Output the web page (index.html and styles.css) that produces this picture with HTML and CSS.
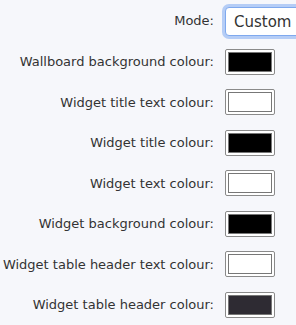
FILE: index.html
```html
<!DOCTYPE html>
<html lang="en">
<head>
	<meta charset="UTF-8">
	<meta name="viewport" content="width=device-width, initial-scale=1.0">
	<title>Wallboard settings</title>
	<link rel="stylesheet" href="styles.css">
</head>
<body>

	<form class="settings">

		<label class="settings__label" for="mode">Mode:</label>
		<div class="settings__control">
			<select id="mode" class="settings__select">
				<option>Custom</option>
				<option>Dark</option>
				<option>Light</option>
			</select>
		</div>

		<label class="settings__label">Wallboard background colour:</label>
		<div class="settings__control"><span class="swatch"><span class="swatch__fill swatch__fill--black"></span></span></div>

		<label class="settings__label">Widget title text colour:</label>
		<div class="settings__control"><span class="swatch"><span class="swatch__fill swatch__fill--white"></span></span></div>

		<label class="settings__label">Widget title colour:</label>
		<div class="settings__control"><span class="swatch"><span class="swatch__fill swatch__fill--black"></span></span></div>

		<label class="settings__label">Widget text colour:</label>
		<div class="settings__control"><span class="swatch"><span class="swatch__fill swatch__fill--white"></span></span></div>

		<label class="settings__label">Widget background colour:</label>
		<div class="settings__control"><span class="swatch"><span class="swatch__fill swatch__fill--black"></span></span></div>

		<label class="settings__label">Widget table header text colour:</label>
		<div class="settings__control"><span class="swatch"><span class="swatch__fill swatch__fill--white"></span></span></div>

		<label class="settings__label">Widget table header colour:</label>
		<div class="settings__control"><span class="swatch"><span class="swatch__fill swatch__fill--dark"></span></span></div>

	</form>

</body>
</html>
```

FILE: styles.css
```css
* {
	margin: 0;
	padding: 0;
	box-sizing: border-box;
	font-family: "DejaVu Sans", Verdana, sans-serif;
}

body {
	background: #f6f7fb;
	color: #333;
}

.settings {
	display: grid;
	grid-template-columns: 214px 71px;
	column-gap: 11px;
	row-gap: 14.5px;
	padding-top: 7px;
	align-items: center;
	overflow: hidden;
}

.settings__label {
	font-size: 13px;
	text-align: right;
	white-space: nowrap;
}

.settings__control {
	display: flex;
	align-items: center;
	padding-left: 4px;
}

.settings__select {
	appearance: none;
	-webkit-appearance: none;
	flex: none;
	width: 110px;
	height: 29px;
	margin-left: -4px;
	margin-bottom: -2px;
	padding: 0 8px;
	font-size: 15px;
	color: #333;
	background: #fff;
	border: 1px solid #7fa9ee;
	border-radius: 4px;
	box-shadow: 0 0 0 3px #b5cdf6;
	outline: none;
}

.swatch {
	display: block;
	width: 50px;
	height: 26px;
	padding: 2px;
	border: 1px solid #8a8a8a;
	border-radius: 2px;
	background: #fff;
	margin-left: -4px;
}

.swatch__fill {
	display: block;
	width: 100%;
	height: 100%;
	border: 1px solid #777;
}

.swatch__fill--black {
	background: #000;
}

.swatch__fill--white {
	background: #fff;
}

.swatch__fill--dark {
	background: #2e2b33;
}
```
